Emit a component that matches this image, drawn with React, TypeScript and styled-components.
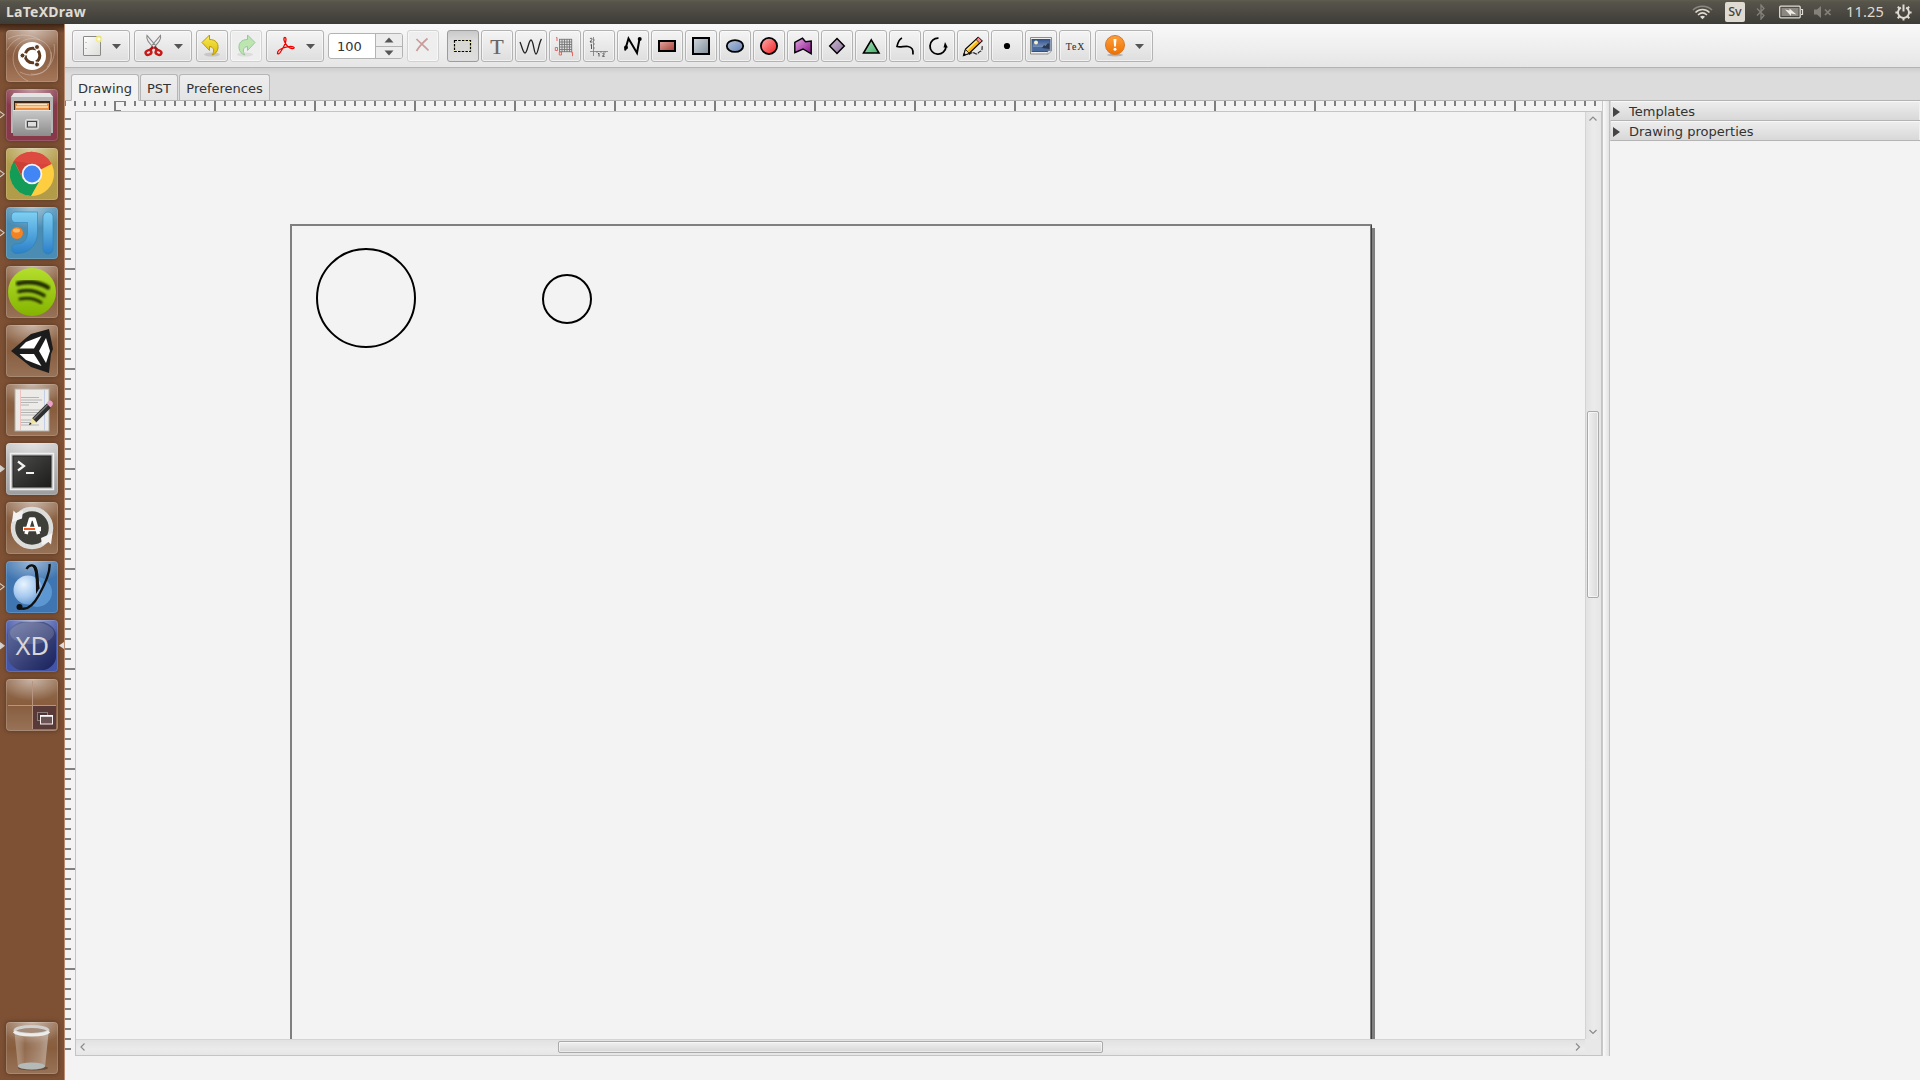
import React from "react";
import styled, { createGlobalStyle, css } from "styled-components";

const Global = createGlobalStyle`
  * { box-sizing: border-box; }
  body { margin: 0; overflow: hidden; }
  svg { display: block; flex: none; }
`;

const Screen = styled.div`
  width: 1920px;
  height: 1080px;
  display: flex;
  flex-direction: column;
  background: #f3f3f3;
  color: #323232;
  font-family: "DejaVu Sans", sans-serif;
  font-size: 13px;
`;

/* ---------- top panel ---------- */
const Panel = styled.header`
  height: 24px;
  flex: none;
  display: flex;
  align-items: center;
  justify-content: space-between;
  padding: 0 8px 0 6px;
  background: linear-gradient(#5f5c50 0, #57544b 2px, #3d3c37 100%);
  color: #dfdbd2;
  font-family: "Noto Sans", sans-serif;
  font-size: 15px;
`;
const AppTitle = styled.span`
  padding-bottom: 2px;
  font-size: 14px;
  font-weight: 700;
  letter-spacing: 0.25px;
`;
const Indicators = styled.div`
  display: flex;
  align-items: center;
`;
const Layout = styled.span`
  width: 20px;
  height: 20px;
  margin: 0 11px 0 12px;
  border-radius: 2px;
  background: #dfdbd2;
  color: #45433d;
  display: grid;
  place-items: center;
  font-size: 12.5px;
  font-weight: 500;
  line-height: 20px;
`;
const Clock = styled.span`
  margin: 0 11px 0 14px;
  padding-bottom: 2px;
  font-size: 14.5px;
  letter-spacing: 0.2px;
`;
const Volume = styled.svg`
  margin-left: 4px;
`;

/* ---------- launcher ---------- */
const Body = styled.div`
  flex: 1;
  display: flex;
  min-height: 0;
`;
const Launcher = styled.nav`
  width: 65px;
  flex: none;
  display: flex;
  flex-direction: column;
  gap: 7px;
  padding: 6px 0;
  background: linear-gradient(rgba(40, 20, 8, 0.75), rgba(40, 20, 8, 0) 9px), #7e5134;
  border-right: 1px solid #b98b70;
`;
const Slot = styled.div<{ $last?: boolean }>`
  height: 52px;
  display: grid;
  grid-template-columns: 6px 52px 6px;
  align-items: center;
  ${(p) => p.$last && css`margin-top: auto;`}
`;
const Tile = styled.div<{ $bg: string }>`
  grid-column: 2;
  width: 52px;
  height: 52px;
  border-radius: 4px;
  overflow: hidden;
  background: radial-gradient(ellipse 34px 22px at 50% 0, rgba(255, 255, 255, 0.5), rgba(255, 255, 255, 0) 100%), ${(p) => p.$bg};
  box-shadow: inset 0 0 0 1px rgba(255, 255, 255, 0.16), 0 0 5px rgba(0, 0, 0, 0.35);
`;

/* ---------- toolbar ---------- */
const Main = styled.main`
  flex: 1;
  display: flex;
  flex-direction: column;
  min-width: 0;
`;
const Toolbar = styled.div`
  height: 44px;
  flex: none;
  display: flex;
  gap: 4px;
  padding: 6px 7px;
  background: linear-gradient(#f9f9f9, #e6e6e6);
  border-bottom: 1px solid #b4b4b4;
`;
const ToolGroup = styled.div<{ $gapAfter?: number }>`
  display: flex;
  gap: 2px;
  margin-right: ${(p) => p.$gapAfter ?? 0}px;
`;
const ToolButton = styled.button<{ $wide?: boolean; $active?: boolean; $off?: boolean }>`
  width: ${(p) => (p.$wide ? 58 : 32)}px;
  height: 32px;
  padding: 0;
  border: 1px solid ${(p) => (p.$active ? "#9c9c9c" : p.$off ? "#d2d2d2" : "#b3b3b3")};
  border-radius: 3px;
  background: ${(p) => (p.$active ? "linear-gradient(#c9c9c9, #dadada 30%, #dedede)" : p.$off ? "#eeeeee" : "linear-gradient(#f4f4f4, #dedede)")};
  box-shadow: ${(p) => (p.$active ? "none" : "inset 0 0 0 1px rgba(255,255,255,.55)")};
  svg { margin: -1px; }
`;
const Spinner = styled.div`
  width: 75px;
  height: 26px;
  margin: 3px 0;
  display: flex;
  border: 1px solid #b3b3b3;
  border-radius: 3px;
  background: #fff;
  overflow: hidden;
`;
const SpinnerValue = styled.span`
  flex: 1;
  padding-left: 8px;
  line-height: 25px;
`;
const SpinnerArrows = styled.div`
  width: 27px;
  display: grid;
  grid-template-rows: 1fr 1fr;
  border-left: 1px solid #b3b3b3;
  background: #ececec;
`;
const SpinnerArrow = styled.span`
  display: grid;
  place-items: center;
  & + & { border-top: 1px solid #b3b3b3; }
`;

/* ---------- tabs ---------- */
const TabBar = styled.div`
  height: 33px;
  flex: none;
  display: flex;
  align-items: flex-end;
  gap: 1px;
  padding-left: 6px;
  background: linear-gradient(#cfcfcf, #dcdcdc 6px);
  box-shadow: inset 0 -1px #b4b4b4;
`;
const Tab = styled.div<{ $active?: boolean; $w: number }>`
  width: ${(p) => p.$w}px;
  height: 27px;
  line-height: 27px;
  text-align: center;
  border: 1px solid #b6b6b6;
  border-bottom-color: ${(p) => (p.$active ? "#f3f3f3" : "#b4b4b4")};
  border-radius: 3px 3px 0 0;
  background: ${(p) => (p.$active ? "#f3f3f3" : "linear-gradient(#eeeeee, #e4e4e4)")};
`;

/* ---------- work area ---------- */
const Work = styled.div`
  height: 955px;
  flex: none;
  display: flex;
`;
const Editor = styled.section`
  width: 1538px;
  display: grid;
  grid-template: 10px 945px / 10px 1528px;
  border-right: 1px solid #c8c8c8;
`;
const RulerTop = styled.div`
  grid-column: 1 / 3;
`;
const Viewport = styled.div`
  display: grid;
  grid-template: 927px 16px / 1509px 16px;
  border: 1px solid #c4c4c4;
  width: 1527px;
`;
const VScroll = styled.div`
  display: flex;
  flex-direction: column;
  align-items: center;
  padding-right: 2px;
  border-left: 1px solid #d4d4d4;
  background: linear-gradient(90deg, #e2e2e2, #ebebeb 50%, #e6e6e6);
`;
const HScroll = styled.div`
  display: flex;
  align-items: center;
  padding-bottom: 2px;
  border-top: 1px solid #d4d4d4;
  background: linear-gradient(#e2e2e2, #ebebeb 60%, #e6e6e6);
`;
const VThumb = styled.div`
  width: 12px;
  height: 187px;
  margin: 285px 0 427px;
  border: 1px solid #aaa;
  border-radius: 2px;
  background: linear-gradient(90deg, #f0f0f0, #dadada);
  box-shadow: inset 0 0 0 1px rgba(255, 255, 255, 0.6);
`;
const HThumb = styled.div`
  width: 545px;
  height: 12px;
  margin: 0 468px 0 468px;
  border: 1px solid #aaa;
  border-radius: 2px;
  background: linear-gradient(#f0f0f0, #d6d6d6);
  box-shadow: inset 0 0 0 1px rgba(255, 255, 255, 0.5);
`;
const Corner = styled.div`
  background: #e8e8e8;
`;
const Splitter = styled.div`
  width: 7px;
  background: linear-gradient(90deg, #fafafa, #e2e2e2);
  border-right: 1px solid #c0c0c0;
`;
const SidePane = styled.aside`
  flex: 1;
`;
const Section = styled.div`
  height: 20px;
  display: flex;
  align-items: center;
  gap: 9px;
  padding: 2px 0 0 2px;
  border-bottom: 1px solid #b4b4b4;
  border-left: 1px solid #d8d8d8;
  background: linear-gradient(#eeeeee, #d8d8d8);
  box-shadow: inset 0 1px #f8f8f8, inset -1px 0 #f0f0f0;
`;

/* ---------- drawings ---------- */
const Ic = ({ w = 32, children }: { w?: number; children: React.ReactNode }) => (
  <svg width={w} height="32" viewBox={`0 0 ${w} 32`} fill="none">{children}</svg>
);
const Drop = () => <path d="M40 14h9l-4.500 5z" fill="#555" />;
const Svg52 = ({ children }: { children: React.ReactNode }) => (
  <svg width="52" height="52" viewBox="0 0 52 52" fill="none">{children}</svg>
);

const Grad = ({ id, a, b }: { id: string; a: string; b: string }) => (
  <linearGradient id={id} x1="0" y1="0" x2="1" y2="1"><stop stopColor={a} /><stop offset="1" stopColor={b} /></linearGradient>
);
const VGrad = ({ id, a, b }: { id: string; a: string; b: string }) => (
  <linearGradient id={id} x1="0" y1="0" x2="0" y2="1"><stop stopColor={a} /><stop offset="1" stopColor={b} /></linearGradient>
);

const NewIcon = () => (
  <Ic w={58}>
    <defs><Grad id="paper" a="#ffffff" b="#dcdcd8" /></defs>
    <rect x="11.500" y="6.500" width="17" height="19" rx=".5" fill="url(#paper)" stroke="#888a85" />
    <path d="M14 12v1m0 5v1" stroke="#999" />
    <circle cx="27" cy="9" r="3.400" fill="#f7ef78" opacity=".85" /><circle cx="27" cy="9" r="1.600" fill="#fffff0" />
    <Drop />
  </Ic>
);
const CutIcon = () => (
  <Ic w={58}>
    <path d="M13 5.500C12 9 14 12 20 18L22 16zM26.500 5.500C27.500 9 25 12 19.500 18L17.500 16z" fill="#eee" stroke="#888" strokeWidth="1.100" />
    <path d="M19 17l-3 3M20.500 17l3 3" stroke="#b01010" strokeWidth="2.500" />
    <ellipse cx="14.500" cy="22.500" rx="3" ry="2.200" stroke="#c81818" strokeWidth="2.400" transform="rotate(-25 14.500 22.500)" />
    <ellipse cx="24.500" cy="22.500" rx="3" ry="2.200" stroke="#c81818" strokeWidth="2.400" transform="rotate(25 24.500 22.500)" />
    <Drop />
  </Ic>
);
const undoPath = "M6 12.500L13.500 5v4.500c6 0 9 3.500 8.500 8.500c-.3 3.500-2.500 6-6 7c2.500-3 2.500-8-2.500-8.500v4z";
const UndoIcon = () => (
  <Ic>
    <defs><VGrad id="undo" a="#fbee5c" b="#dcb800" /></defs>
    <ellipse cx="16" cy="24.500" rx="8" ry="2" fill="#000" opacity=".12" />
    <path d={undoPath} fill="url(#undo)" stroke="#b59a0a" strokeLinejoin="round" />
  </Ic>
);
const RedoIcon = () => (
  <Ic>
    <g opacity=".6"><ellipse cx="15" cy="24.500" rx="8" ry="2" fill="#000" opacity=".12" />
      <path transform="translate(31 0) scale(-1 1)" d={undoPath} fill="#9de08a" stroke="#5fae5a" strokeLinejoin="round" /></g>
  </Ic>
);
const PdfIcon = () => (
  <Ic w={58}>
    <path d="M19 7.500c-1.500 0-1.500 2 0 5c1.500 3.500 4 5.500 7 6c2 .3 2.800-.8 1.500-1.500c-2-1-7.500 0-10.500 1c-3 1.200-5.500 3.500-5.500 5c0 1.500 1.600 1.300 3-1c2.400-3.600 5.500-9.500 5.500-12.500c0-1.300-.4-2-1-2z" stroke="#f00000" strokeWidth="1.300" />
    <Drop />
  </Ic>
);
const DeleteIcon = () => (
  <Ic><path d="M9.500 9c3 3 8 7.500 12 11.500M20.500 8.500C16.500 12 12.500 16 9.500 21" stroke="#c89c9c" strokeWidth="1.700" /></Ic>
);
const serif = "Liberation Serif, serif";

const tools: { name: string; art: React.ReactNode }[] = [
  { name: "Select", art: (<><rect x="7.500" y="10.500" width="16" height="11" stroke="#f5f0b0" fill="#d8d8d4" /><rect x="7.500" y="10.500" width="16" height="11" stroke="#000" strokeWidth="1.200" strokeDasharray="2.500 1.200" /></>) },
  { name: "Text", art: <text x="9.300" y="23.500" fontFamily={serif} fontSize="22" fill="#666" stroke="#666" strokeWidth=".2">T</text> },
  { name: "Plot", art: <path d="M5 12c2.500 6 3 11 5 11c2.500 0 3.500-13 6-13s3 14 5 14s3-12 5.500-15" stroke="#222" strokeWidth="1.300" /> },
  { name: "Grid", art: (<><rect x="10" y="9" width="13" height="13" fill="#ddd" /><path d="M10.500 9v13M13 9v13M15.500 9v13M18 9v13M20.500 9v13M22.700 9v13M10 9.300h13M10 12h13M10 14.500h13M10 17h13M10 19.500h13M10 21.700h13" stroke="#777" strokeWidth=".9" /><path d="M7 8l1-.6v3.600M6.300 17.500h2.200v3h-2.200zM10.300 22h2.200v3h-2.200zM22.300 22.800l1.200-.6v4" stroke="#e8695c" strokeWidth="1" /></>) },
  { name: "Axes", art: (<><path d="M10.500 7v19M7 21.500h18M10 10h2M10 14h2M10 18h2M14 21v2M18 21v2M22 21v2" stroke="#777" strokeWidth=".8" /><path d="M7 9c.5-1.200 2.300-1 2 .3L7 12h2.500M7.500 15l1-.6V19M15 23.800l1-.6v3.300M19.500 23.800c.5-1 2-.8 1.700.3l-1.700 2.200h2.200" stroke="#444" strokeWidth=".9" /></>) },
  { name: "Joined lines", art: (<><path d="M8 20.500L11.500 8.500L20 23L22.500 9" stroke="#000" strokeWidth="2" /><circle cx="9" cy="17.500" r="2" fill="#000" /><circle cx="22.700" cy="9" r="2" fill="#000" /></>) },
  { name: "Rectangle", art: <rect x="8" y="11" width="16" height="10" fill="url(#gRed)" stroke="#000" strokeWidth="2" /> },
  { name: "Square", art: <rect x="8" y="8" width="16" height="16" fill="url(#gSteel)" stroke="#000" strokeWidth="2" /> },
  { name: "Ellipse", art: <ellipse cx="16" cy="16" rx="8.200" ry="5.900" fill="url(#gBlue)" stroke="#000" strokeWidth="1.800" /> },
  { name: "Circle", art: <circle cx="16" cy="16" r="8.100" fill="url(#gRound)" stroke="#000" strokeWidth="1.800" /> },
  { name: "Polygon", art: <path d="M7.800 12.300L15.500 8.200L18.500 11.700L24.200 11V23.800L16 19L7.800 22.700z" fill="url(#gPurple)" stroke="#000" strokeWidth="1.400" /> },
  { name: "Rhombus", art: <path d="M16 8.500l7.300 7.500L16 23.500L8.700 16z" fill="url(#gMauve)" stroke="#000" strokeWidth="1.500" /> },
  { name: "Triangle", art: <path d="M16.300 9.800L24 23H8.500z" fill="url(#gGreen)" stroke="#000" strokeWidth="1.600" /> },
  { name: "Bezier", art: <path d="M13 8c-2.500 1-4 4-5 8.500c3 1.200 7-.5 11 0c3.500.5 5.500 3.500 5 8" stroke="#000" strokeWidth="1.700" /> },
  { name: "Arc", art: (<><path d="M15.500 8.200a8 8 0 1 0 7.500 8.500" stroke="#000" strokeWidth="1.800" /><path d="M22 12l2.800 5.500h-4.300z" fill="#000" /></>) },
  { name: "Freehand", art: (<><path d="M12 24.500c3-3 4-2 7-.5c3-.5 2-2 5-3c2-1.500.5-4 1.500-5" stroke="#222" strokeWidth="1.200" strokeDasharray="4 1" /><path d="M6.500 25.500L8.500 19L21 7.500L25 11L12 23.500z" fill="#f7b71a" stroke="#000" strokeWidth="1.100" /><path d="M10 20L21 9.500" stroke="#ffe680" strokeWidth="1.500" /><path d="M19 9.500l2.500-2.300l3.700 3.700l-2.500 2.200z" fill="#f58a94" stroke="#000" strokeWidth=".7" /><path d="M6.500 25.500l2-6l3.700 3.800z" fill="#f3dfc0" stroke="#000" strokeWidth=".8" /><path d="M6.500 25.500l.8-2.600l1.800 1.700z" fill="#000" /></>) },
  { name: "Dot", art: <circle cx="16" cy="16" r="3.100" fill="#000" /> },
  { name: "Picture", art: (<><path d="M5.500 7.500h21v13.500l-3.500 3H5.500z" fill="#eee" stroke="#8b8b88" /><rect x="7" y="9.500" width="18" height="12" fill="url(#gPic)" stroke="#34507f" /><path d="M7.500 17h17v4h-17z" fill="#4a699c" /><path d="M17 18l2-3l1.500 1l2.500-3l1.500 1v5z" fill="#2c3850" /><circle cx="11" cy="12.500" r="2" fill="#f6f3c0" /><path d="M23 24v-3h3.500z" fill="#fff" stroke="#999" strokeWidth=".6" /></>) },
  { name: "TeX", art: <text x="6.800" y="19.500" fontFamily={serif} fontSize="9.800" fill="#333" stroke="#333" strokeWidth=".1" textLength="18.500">TeX</text> },
];

const ToolDefs = () => (
  <svg width="0" height="0">
    <defs>
      <Grad id="gRed" a="#e3aaa2" b="#a53c34" /><Grad id="gSteel" a="#d0d8de" b="#7f8d99" />
      <Grad id="gBlue" a="#b9c6de" b="#6583b5" /><Grad id="gRound" a="#ffb0b0" b="#f01c1c" />
      <Grad id="gPurple" a="#e2a8e2" b="#8a118c" /><Grad id="gMauve" a="#cdbcd4" b="#88709a" />
      <Grad id="gGreen" a="#b6e3c5" b="#3fae68" /><VGrad id="gPic" a="#35558c" b="#9db4d4" />
    </defs>
  </svg>
);

type App = { name: string; bg: string; run?: "open" | "shut"; focus?: boolean; art: React.ReactNode };
const glass = "linear-gradient(rgba(255,255,255,.12), rgba(255,255,255,.03) 50%, rgba(255,255,255,.16)), #845838";

const apps: App[] = [
  {
    name: "Dash", bg: "linear-gradient(#a17a61, #8a5e42 50%, #a5785c)",
    art: (<><g fill="none" stroke="#e8d5c8" strokeWidth="1" opacity=".4"><path d="M8 35C3 16 20 3 36 11c10 5 12 18 5 26M14 42c18 10 38-6 34-28M2 9c9-5 22-6 32 1M45 22c2 14-6 24-20 22M1 20c4-7 8-10 13-12M8 35c3 8 7 13 14 16" /></g>
      <circle cx="26" cy="26" r="14" fill="#fff" /><circle cx="26.500" cy="25.500" r="7.300" stroke="#5e3a22" strokeWidth="3" strokeDasharray="13.200 2.100" strokeDashoffset="5.500" />
      <g fill="#5e3a22" stroke="#fff" strokeWidth="1"><circle cx="16.500" cy="25.500" r="2.500" /><circle cx="31" cy="17" r="2.500" /><circle cx="31" cy="34.500" r="2.500" /></g></>),
  },
  {
    name: "Files", bg: "#87394a", run: "open",
    art: (<><defs><VGrad id="cab" a="#c9c9c9" b="#8c8c8c" /></defs><path d="M8 4h36l3 4v36H5V8z" fill="#b6b6b6" /><path d="M8 4h36l3 4H5z" fill="#e4e4e4" /><rect x="8" y="12" width="36" height="12" fill="#3c2415" /><rect x="9" y="14" width="34" height="8" fill="#ec8f3f" /><path d="M11 15.500h30M10 18h32" stroke="#fde4bd" strokeWidth="1.300" /><rect x="7" y="21" width="38" height="26" rx="1" fill="url(#cab)" /><path d="M7 21.500h38" stroke="#e3e3e3" /><rect x="19.500" y="30.500" width="13" height="9.500" rx="1.500" fill="#bbb" stroke="#ddd" /><rect x="21.500" y="32.500" width="9" height="5.500" fill="#ddd" stroke="#444" /></>),
  },
  {
    name: "Chrome", bg: "#b29c4a", run: "open",
    art: (<><circle cx="26" cy="26" r="22" fill="#ffcd40" /><path d="M26 26L7 14.500A22 22 0 0 1 45.500 16z" fill="#d8443a" /><path d="M26 16h19.500A22 22 0 0 0 8 13z" fill="#dc4a40" /><path d="M8 13A22 22 0 0 0 25 48l9.500-17L26 35L17 31z" fill="#129c58" /><path d="M8 13l8.500 17l9-14z" fill="#cc3f35" /><circle cx="26" cy="26" r="10.300" fill="#f4f4f4" /><circle cx="26" cy="26" r="8.500" fill="#4285f4" /></>),
  },
  {
    name: "IntelliJ", bg: "#4a8cb2", run: "open",
    art: (<><defs><VGrad id="ij" a="#7fd0f2" b="#2b80c8" /></defs><path d="M9 5h22.500v19c0 14-8 23-22 22.500c-5-.5-5-9 0-9.500c8 0 12-4 12-12V15.500H9c-5 0-5-10.500 0-10.500z" fill="url(#ij)" stroke="#2c82ba" strokeWidth=".6" /><rect x="37" y="5" width="10" height="42" rx="5" fill="url(#ij)" stroke="#2c82ba" strokeWidth=".6" /><circle cx="11" cy="26" r="6" fill="#f58220" /><ellipse cx="10.500" cy="23.500" rx="3.500" ry="2" fill="#fdbb6b" /></>),
  },
  {
    name: "Spotify", bg: glass,
    art: (<><defs><filter id="soft"><feGaussianBlur stdDeviation=".9" /></filter><VGrad id="sp" a="#b4de2c" b="#83b300" /></defs><circle cx="26" cy="26" r="24" fill="url(#sp)" /><g filter="url(#soft)" stroke="#222d04" strokeLinecap="round"><path d="M12 17.500c10-2.500 22-1.500 30 4" strokeWidth="4.500" /><path d="M13 25.500c8-2 17-1 25 4" strokeWidth="3.600" /><path d="M14 33c7-1.500 14-1 21 3.500" strokeWidth="3" /></g></>),
  },
  {
    name: "Unity", bg: glass,
    art: (<><path d="M5 26L20 13L25 9L43 4l4 20l-2 5l-2 19L25 42L20 38z" fill="#1c1c1c" /><path d="M13.500 23.500L20 17l15.500-6L28 23.500z" fill="#fff" /><path d="M13.500 29H28l7.500 12L20 35z" fill="#fff" /><path d="M33 26l7-13l4 13l-4 12z" fill="#fff" /></>),
  },
  {
    name: "Text Editor", bg: glass,
    art: (<><rect x="9" y="5" width="34" height="42" fill="#ecebe8" stroke="#b4b0aa" /><path d="M14.500 6v40" stroke="#f0b8b4" strokeWidth=".8" /><path d="M38.500 6v40" stroke="#b9c6e6" strokeWidth=".8" /><path d="M15 13.500h18M15 16h21M15 18.500h17M15 21h8M15 26h20M15 28.500h17M15 31h16M15 36h12M15 38.500h10M15 41h18" stroke="#b4b4b4" strokeWidth="1" /><path d="M28 36.500L43 21.500" stroke="#2e2e2e" strokeWidth="6" /><path d="M27.500 35L41.500 21" stroke="#777" strokeWidth="1.500" /><path d="M40.500 19l2-2c2-1.500 5.500 1.500 4 4l-2 2.500z" fill="#e8a3c9" /><path d="M23.500 40.500l2.500-6.500l4.500 4.500z" fill="#efe3a0" /><path d="M23 41l1-2.500l1.700 1.500z" fill="#111" /></>),
  },
  {
    name: "Terminal", bg: "linear-gradient(#c8c8c8, #9e9e9e)", run: "shut",
    art: (<><defs><Grad id="term" a="#4c4c4a" b="#1c1c1a" /></defs><rect x="4.500" y="10.500" width="43" height="36" fill="#bbb" stroke="#f0f0f0" strokeWidth="1.500" /><rect x="7" y="13" width="38" height="31" fill="url(#term)" stroke="#222" /><path d="M12 18.500l6 4.500l-6 4.500" stroke="#f4f4f4" strokeWidth="2.200" /><path d="M20 30h8" stroke="#f4f4f4" strokeWidth="2" /></>),
  },
  {
    name: "Software Updater", bg: glass,
    art: (<><circle cx="26" cy="26" r="19" stroke="#dcdcda" strokeWidth="4.500" fill="#3f3f3a" /><path d="M6 20l1.500-11.500l2.500 2.500l7-2.500l-1 8zM46.500 31L45 42.500L42.500 40L36 43l-1-7z" fill="#f2f2f2" /><path d="M20 32l4.500-15h3.500L32.500 32" stroke="#fff" strokeWidth="3.600" strokeLinejoin="round" /><path d="M17 27h18" stroke="#fff" strokeWidth="4.500" /><path d="M18 27h11" stroke="#f15a22" strokeWidth="2" /></>),
  },
  {
    name: "yEd", bg: "#3f75b0", run: "open",
    art: (<><defs><radialGradient id="yed" cx=".35" cy=".3" r=".8"><stop stopColor="#e8f4ff" /><stop offset=".55" stopColor="#a5c8ee" /><stop offset="1" stopColor="#5b92d0" /></radialGradient></defs><circle cx="31" cy="31" r="15" fill="#5d97d2" /><circle cx="22" cy="29" r="14.500" fill="url(#yed)" /><path d="M20.500 8c3-5 8-5 9.500 1l2.500 19M43.500 3c1 8-4.500 20-10.500 31c-5 9-12 16-19 13" stroke="#111" strokeWidth="2.400" /><path d="M25 4c6-2 8 4 8 24l-3 5c0-14 0-26-5-29z" fill="#111" /><circle cx="13.500" cy="46" r="3" fill="#111" /></>),
  },
  {
    name: "LaTeXDraw", bg: "#4355a8", run: "shut", focus: true,
    art: (<><defs><Grad id="xd" a="#6873a0" b="#121a52" /></defs><path d="M14 2h24c6 2 12 7 12 13v22c0 6-6 12-12 13H14C8 49 2 43 2 37V15C2 9 8 4 14 2z" fill="url(#xd)" opacity=".9" /><ellipse cx="26" cy="13" rx="22" ry="11" fill="#fff" opacity=".14" /><text x="9.500" y="35" fontFamily="Noto Sans, sans-serif" fontSize="26" fill="#d6d6d8" textLength="33.500" lengthAdjust="spacingAndGlyphs">XD</text></>),
  },
  {
    name: "Workspaces", bg: glass,
    art: (<><rect x="27" y="27" width="23" height="23" fill="#5a3a38" /><path d="M26.500 2v48M2 26.500h48" stroke="#b89580" /><rect x="31.500" y="33.500" width="10" height="8" fill="#4a3434" stroke="#8f7f7c" /><rect x="34.500" y="36.500" width="12" height="8.500" fill="#6b5355" stroke="#f4f0ee" /><path d="M34 37h13" stroke="#fff" strokeWidth="1.600" /></>),
  },
  {
    name: "Trash", bg: glass,
    art: (<><defs><linearGradient id="bin"><stop stopColor="#cbb9ac" stopOpacity=".5" /><stop offset=".3" stopColor="#fff" stopOpacity=".08" /><stop offset=".75" stopColor="#fff" stopOpacity=".25" /><stop offset="1" stopColor="#ddd" stopOpacity=".5" /></linearGradient></defs><ellipse cx="27" cy="46" rx="15" ry="2.500" fill="#000" opacity=".3" /><path d="M8.500 11L12 45c5 3.500 22 3.500 27 0l3.500-34z" fill="url(#bin)" /><ellipse cx="25.500" cy="44" rx="13.500" ry="3.500" fill="#b4bab8" /><ellipse cx="25.500" cy="8.500" rx="16.500" ry="4" fill="#a48b7a" stroke="#d0d0ce" strokeWidth="3" /><path d="M8 9.500c4 4.500 31 4.500 35 0" stroke="#ececec" strokeWidth="3" /></>),
  },
];

const LaunchItem = ({ app, last }: { app: App; last?: boolean }) => (
  <Slot $last={last}>
    {app.run && (
      <svg width="6" height="10" viewBox="0 0 6 10"><path d="M-.5 1.300L4.200 4.800L-.5 8.300z" fill={app.run === "shut" ? "#d8d4d0" : "none"} stroke="#d8d4d0" strokeWidth="1.100" /></svg>
    )}
    <Tile $bg={app.bg}><Svg52>{app.art}</Svg52></Tile>
    {app.focus && <svg width="6" height="10" viewBox="0 0 6 10"><path d="M6 1v7L1 4.500z" fill="#dcdcdc" /></svg>}
  </Slot>
);

const hTicks = Array.from({ length: 154 }, (_, i) => i * 10);
const vTicks = Array.from({ length: 95 }, (_, i) => 8 + i * 10);

export default function App() {
  return (
    <Screen>
      <Global />
      <Panel>
        <AppTitle>LaTeXDraw</AppTitle>
        <Indicators>
          <svg width="21" height="16" viewBox="0 0 21 16" fill="none" strokeWidth="1.600">
            <path d="M1 6c5-5 14-5 19 0" stroke="#8b8881" /><path d="M3.500 8.500c4-4 10-4 14 0M6 11c3-2.800 6-2.800 9 0" stroke="#dfdbd2" /><path d="M8 12.800c1.500-1.300 3.500-1.300 5 0l-2.500 2.500z" fill="#dfdbd2" />
          </svg>
          <Layout>Sv</Layout>
          <svg width="10" height="16" viewBox="0 0 10 16" fill="none"><path d="M1 4.500l7 7L5 15V1l3 3.500l-7 7" stroke="#85827b" strokeWidth="1.300" /></svg>
          <svg width="38" height="14" viewBox="0 0 38 14" fill="none">
            <rect x="13.700" y="1.200" width="20.500" height="11.600" rx="1" stroke="#dfdbd2" strokeWidth="1.300" /><rect x="15.500" y="3" width="17" height="8" fill="#8b8881" /><path d="M35 4.500h1.500v5H35" stroke="#dfdbd2" strokeWidth="1.200" /><path d="M19 4.500l4.500 1v-2l7 6l-5.500-1v2.500z" fill="#eeebe4" />
          </svg>
          <Volume width="24" height="14" viewBox="0 0 24 14" fill="none"><path d="M6 4.500h3l4-3.500v12l-4-3.500H6z" fill="#85827b" /><path d="M17 4.500l5.500 5.500M22.500 4.500L17 10" stroke="#85827b" strokeWidth="1.700" /></Volume>
          <Clock>11.25</Clock>
          <svg width="17" height="17" viewBox="0 0 17 17" fill="none" stroke="#dfdbd2">
            <path d="M5.900 3.600a5.500 5.500 0 1 0 5.200 0" strokeWidth="1.900" /><path d="M8.500 .5v7" strokeWidth="2" />
            <path d="M2.800 2.800L5 5M14.200 2.800L12 5M.4 8.500H3M14 8.500h2.600M2.700 14.300l2-2M14.300 14.300l-2-2M8.500 14v2.600" strokeWidth="2" />
          </svg>
        </Indicators>
      </Panel>

      <Body>
        <Launcher>
          {apps.map((a, i) => <LaunchItem key={a.name} app={a} last={i === apps.length - 1} />)}
        </Launcher>

        <Main>
          <Toolbar>
            <ToolButton $wide aria-label="New"><NewIcon /></ToolButton>
            <ToolButton $wide aria-label="Cut"><CutIcon /></ToolButton>
            <ToolGroup>
              <ToolButton aria-label="Undo"><UndoIcon /></ToolButton>
              <ToolButton $off aria-label="Redo"><RedoIcon /></ToolButton>
            </ToolGroup>
            <ToolButton $wide aria-label="Export"><PdfIcon /></ToolButton>
            <Spinner>
              <SpinnerValue>100</SpinnerValue>
              <SpinnerArrows>
                <SpinnerArrow><svg width="10" height="6" viewBox="0 0 10 6"><path d="M.5 5.500h9L5 .5z" fill="#555" /></svg></SpinnerArrow>
                <SpinnerArrow><svg width="10" height="6" viewBox="0 0 10 6"><path d="M.5 .5h9L5 5.500z" fill="#555" /></svg></SpinnerArrow>
              </SpinnerArrows>
            </Spinner>
            <ToolGroup $gapAfter={4}>
              <ToolButton $off aria-label="Delete"><DeleteIcon /></ToolButton>
            </ToolGroup>
            <ToolGroup>
              {tools.map((t, i) => (
                <ToolButton key={t.name} aria-label={t.name} $active={i === 0}><Ic>{t.art}</Ic></ToolButton>
              ))}
            </ToolGroup>
            <ToolButton $wide aria-label="Notifications">
              <Ic w={58}>
                <defs><VGrad id="warn" a="#fba03c" b="#f07000" /></defs>
                <ellipse cx="20" cy="25" rx="8" ry="1.500" fill="#000" opacity=".2" />
                <circle cx="20" cy="15" r="9.500" fill="url(#warn)" stroke="#d5782a" />
                <path d="M18.500 9h3l-.6 7.500h-1.800z" fill="#fff" /><circle cx="20" cy="19.300" r="1.500" fill="#fff" />
                <Drop />
              </Ic>
            </ToolButton>
            <ToolDefs />
          </Toolbar>

          <TabBar>
            <Tab $active $w={68}>Drawing</Tab>
            <Tab $w={38}>PST</Tab>
            <Tab $w={91}>Preferences</Tab>
          </TabBar>

          <Work>
            <Editor>
              <RulerTop>
                <svg width="1537" height="10" viewBox="0 0 1537 10" shapeRendering="crispEdges" fill="#7f7f7f">
                  {hTicks.map((x) => <rect key={x} x={x - 1} y="0" width="2" height={x % 100 === 50 ? 10 : 5} />)}
                  <path d="M50 0h10v1H50zM50 9h6v1H50z" />
                </svg>
              </RulerTop>
              <svg width="11" height="945" viewBox="0 0 11 945" shapeRendering="crispEdges" fill="#7f7f7f">
                {vTicks.map((y) => <rect key={y} x="0" y={y - 11} width={y % 100 === 68 ? 11 : 6} height="2" />)}
              </svg>
              <Viewport>
                <svg width="1509" height="927" viewBox="76 112 1509 927" fill="none">
                  <g shapeRendering="crispEdges">
                    <rect x="1371" y="228" width="4" height="811" fill="#7f7f7f" />
                    <path d="M290 224h1082v2H292v813h-2z" fill="#7f7f7f" />
                    <path d="M1370 224h1v815h-1z" fill="#7f7f7f" />
                    <path d="M1371 225h1v814h-1z" fill="#404040" />
                  </g>
                  <circle cx="366" cy="298" r="49" stroke="#000" strokeWidth="2" />
                  <circle cx="567" cy="299" r="24" stroke="#000" strokeWidth="2" />
                </svg>
                <VScroll>
                  <svg width="10" height="14" viewBox="0 0 10 14" fill="none"><path d="M1.500 8.500L5 5l3.500 3.500" stroke="#8c8c8c" strokeWidth="1.200" /></svg>
                  <VThumb />
                  <svg width="10" height="14" viewBox="0 0 10 14" fill="none"><path d="M1.500 5L5 8.500L8.500 5" stroke="#8c8c8c" strokeWidth="1.200" /></svg>
                </VScroll>
                <HScroll>
                  <svg width="14" height="10" viewBox="0 0 14 10" fill="none"><path d="M8.500 1.500L5 5l3.500 3.500" stroke="#8c8c8c" strokeWidth="1.200" /></svg>
                  <HThumb />
                  <svg width="14" height="10" viewBox="0 0 14 10" fill="none"><path d="M5 1.500L8.500 5L5 8.500" stroke="#8c8c8c" strokeWidth="1.200" /></svg>
                </HScroll>
                <Corner />
              </Viewport>
            </Editor>
            <Splitter />
            <SidePane>
              {["Templates", "Drawing properties"].map((s) => (
                <Section key={s}>
                  <svg width="7" height="10" viewBox="0 0 7 10"><path d="M0 0v10l7-5z" fill="#444" /></svg>
                  {s}
                </Section>
              ))}
            </SidePane>
          </Work>
        </Main>
      </Body>
    </Screen>
  );
}
